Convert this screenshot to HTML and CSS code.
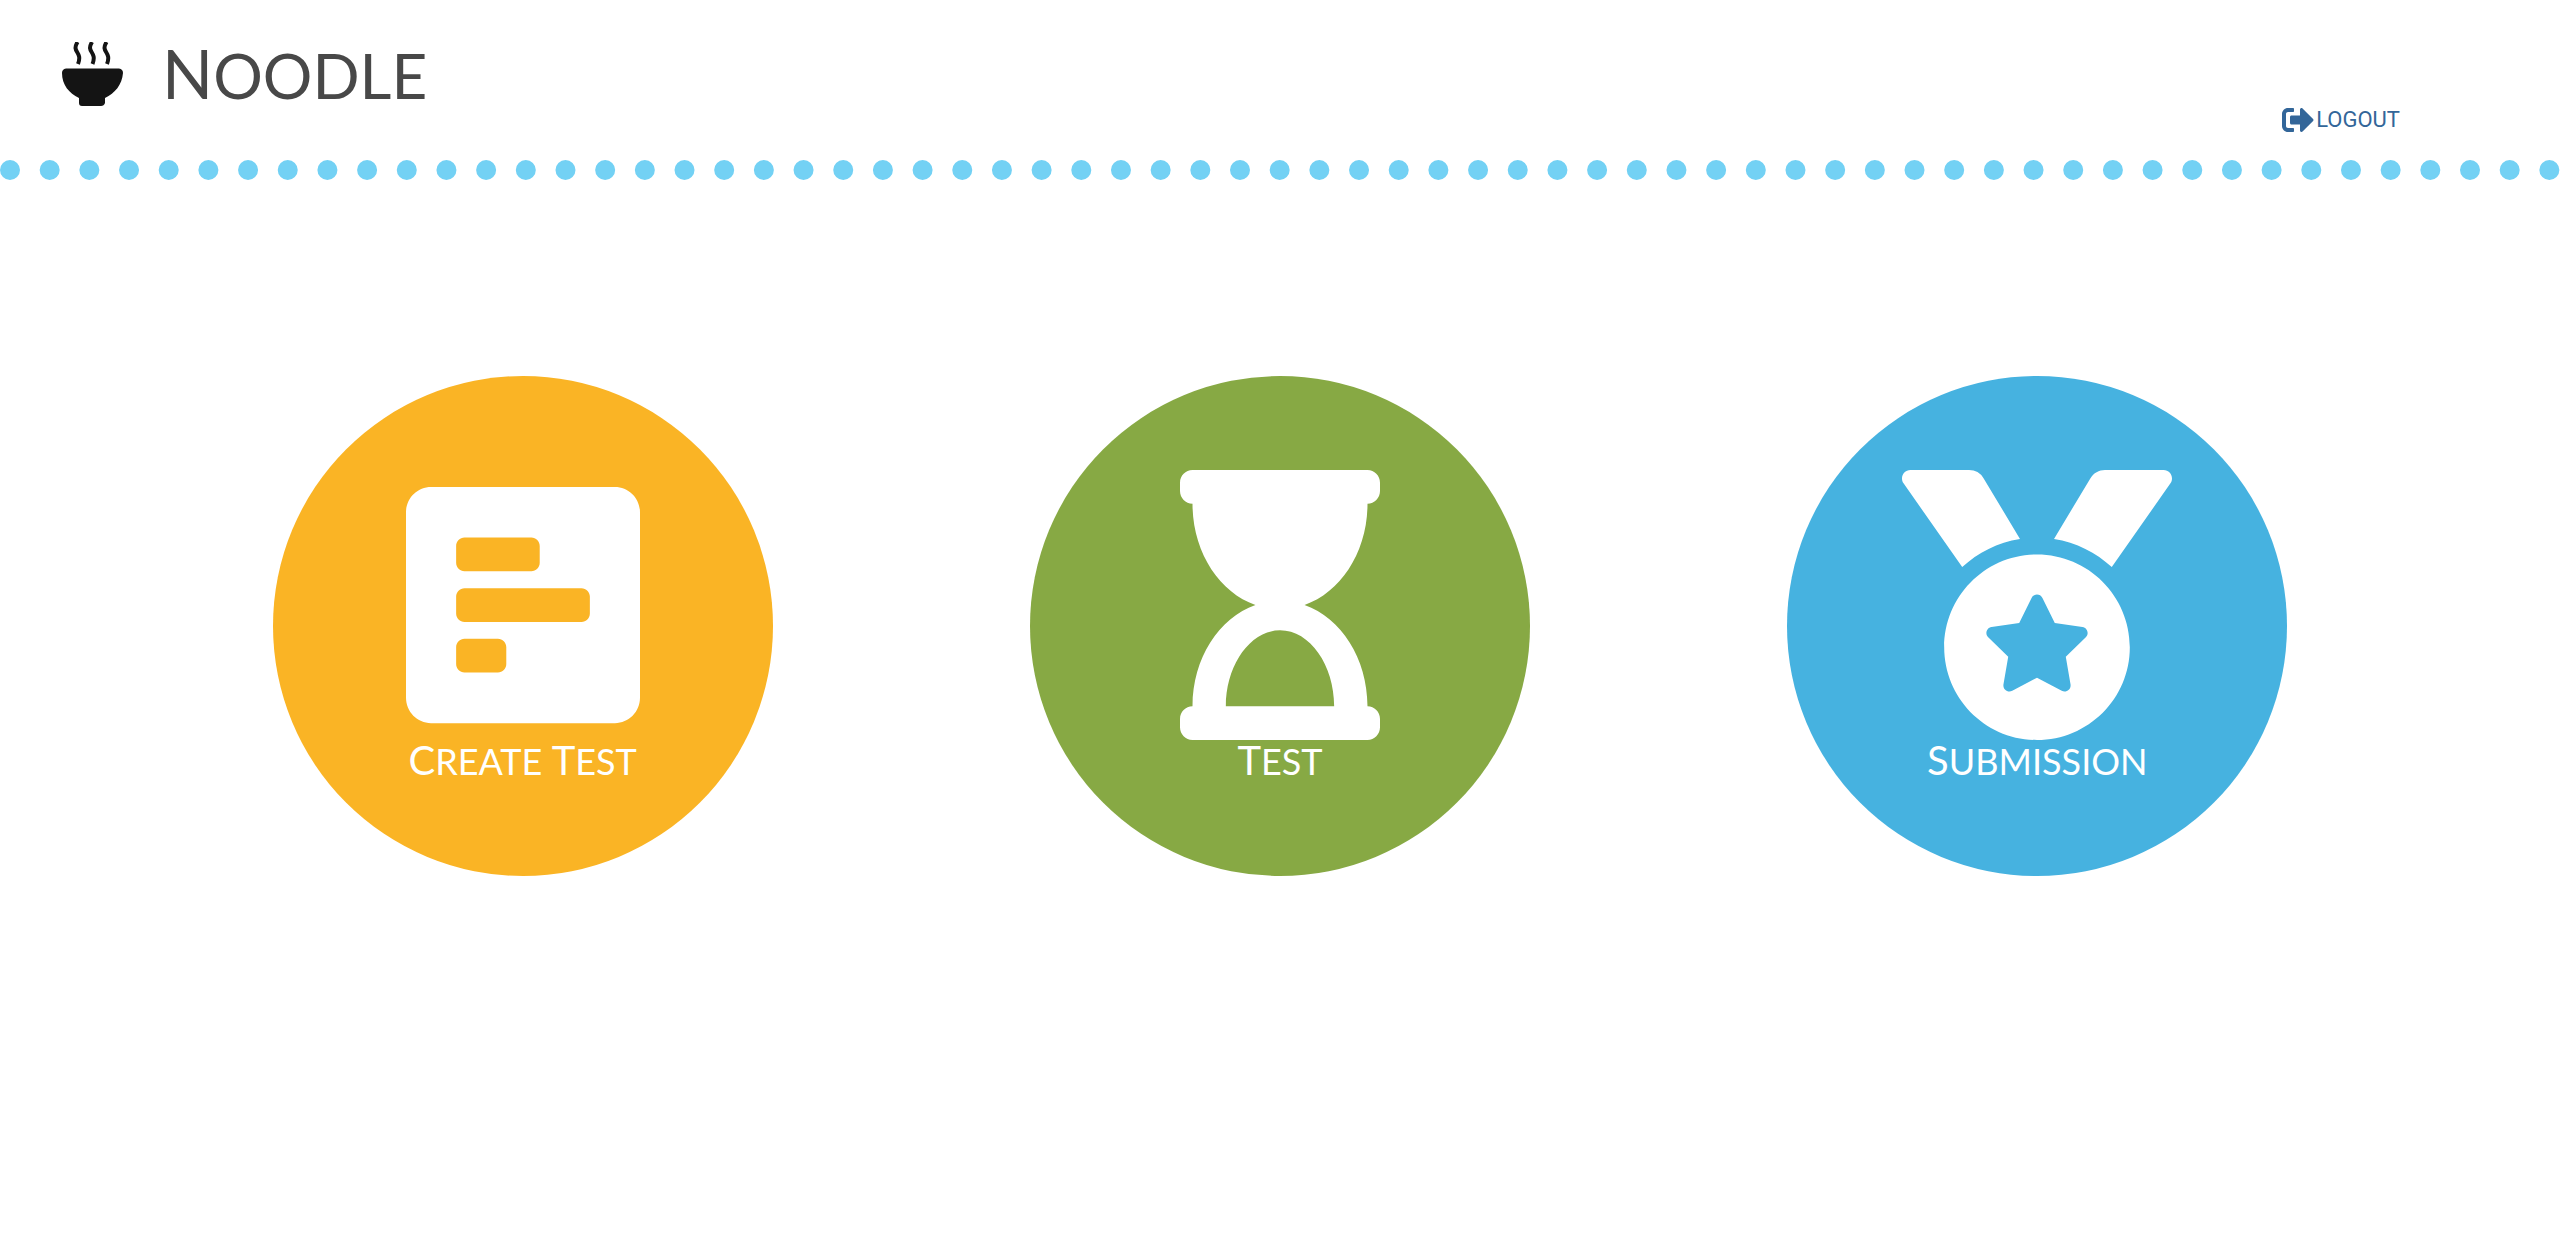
FILE: index.html
```html
<!DOCTYPE html>
<html lang="en">
<head>
<meta charset="utf-8">
<meta name="viewport" content="width=device-width, initial-scale=1">
<title>Noodle</title>
<link rel="stylesheet" href="styles.css">
</head>
<body>
<header class="header">
  <div class="brand">
    <svg class="brand-logo" viewBox="0 0 64 64" aria-hidden="true">
      <path d="M6 26.500H59Q63 27 63 31C62 43 55 51 45 56V61Q44 64 41 64H22Q19 64 19 61V56C9 51 2 43 2 31Q2 27 6 26.500Z"/>
      <g class="steam"><path d="M17.500 0C11 11 23 9 18 22"/><path d="M32 0C25.500 11 37.500 9 32.500 22"/><path d="M46.500 0C40 11 52 9 47 22"/></g>
    </svg>
    <h1 class="brand-name">Noodle</h1>
  </div>
  <a class="logout" href="#">
    <svg class="logout-icon" viewBox="0 0 512 512" aria-hidden="true"><path d="M497 273L329 441c-15 15-41 4.500-41-17v-96H152c-13.300 0-24-10.700-24-24v-96c0-13.300 10.700-24 24-24h136V88c0-21.400 25.900-32 41-17l168 168c9.300 9.400 9.300 24.600 0 34zM192 436v-40c0-6.600-5.400-12-12-12H96c-17.700 0-32-14.300-32-32V160c0-17.700 14.300-32 32-32h84c6.600 0 12-5.400 12-12V76c0-6.600-5.400-12-12-12H96c-53 0-96 43-96 96v192c0 53 43 96 96 96h84c6.600 0 12-5.400 12-12z"/></svg>
    <span>LOGOUT</span>
  </a>
</header>
<main class="menu">
  <a class="tile tile-create" href="#">
    <svg class="tile-icon icon-poll" viewBox="0 0 448 512" preserveAspectRatio="none" aria-hidden="true"><path d="M448 432V80c0-26.500-21.500-48-48-48H48C21.500 32 0 53.500 0 80v352c0 26.500 21.500 48 48 48h352c26.500 0 48-21.500 48-48zM112 192c-8.840 0-16-7.160-16-16v-32c0-8.840 7.160-16 16-16h128c8.840 0 16 7.160 16 16v32c0 8.840-7.160 16-16 16H112zm0 96c-8.840 0-16-7.160-16-16v-32c0-8.840 7.160-16 16-16h224c8.840 0 16 7.160 16 16v32c0 8.840-7.160 16-16 16H112zm0 96c-8.840 0-16-7.160-16-16v-32c0-8.840 7.160-16 16-16h64c8.840 0 16 7.160 16 16v32c0 8.840-7.160 16-16 16h-64z"/></svg>
    <span class="tile-label"><span class="word">Create</span> <span class="word">Test</span></span>
  </a>
  <a class="tile tile-test" href="#">
    <svg class="tile-icon icon-hourglass" viewBox="0 0 384 512" preserveAspectRatio="none" aria-hidden="true"><path d="M360 0H24C10.745 0 0 10.745 0 24v16c0 13.255 10.745 24 24 24 0 90.965 51.016 167.734 120.842 192C75.016 280.266 24 357.035 24 448c-13.255 0-24 10.745-24 24v16c0 13.255 10.745 24 24 24h336c13.255 0 24-10.745 24-24v-16c0-13.255-10.745-24-24-24 0-90.965-51.016-167.734-120.842-192C308.984 231.734 360 154.965 360 64c13.255 0 24-10.745 24-24V24c0-13.255-10.745-24-24-24zm-64 448H88c0-77.458 46.204-144 104-144 57.786 0 104 66.517 104 144z"/></svg>
    <span class="tile-label"><span class="word">Test</span></span>
  </a>
  <a class="tile tile-submission" href="#">
    <svg class="tile-icon" viewBox="0 0 512 512" aria-hidden="true"><path d="M223.750 130.750L154.620 15.540A31.997 31.997 0 0 0 127.180 0H16.030C3.080 0-4.500 14.570 2.920 25.180l111.270 158.960c29.720-27.770 67.520-46.830 109.560-53.390zM495.970 0H384.820c-11.240 0-21.660 5.900-27.440 15.540l-69.130 115.210c42.040 6.560 79.840 25.620 109.560 53.380L509.080 25.180C516.500 14.570 508.920 0 495.970 0zM256 160c-97.200 0-176 78.800-176 176s78.800 176 176 176 176-78.800 176-176-78.800-176-176-176zm92.520 157.260l-37.930 36.960 8.970 52.220c1.600 9.360-8.260 16.510-16.650 12.090L256 393.880l-46.900 24.650c-8.400 4.450-18.250-2.740-16.650-12.090l8.970-52.220-37.930-36.960c-6.820-6.640-3.050-18.230 6.350-19.590l52.430-7.640 23.430-47.520c2.110-4.280 6.190-6.390 10.280-6.390 4.110 0 8.220 2.140 10.330 6.390l23.430 47.520 52.430 7.640c9.400 1.360 13.170 12.950 6.350 19.590z"/></svg>
    <span class="tile-label"><span class="word">Submission</span></span>
  </a>
</main>
</body>
</html>
```

FILE: styles.css
```css
* {
  box-sizing: border-box;
}

body {
  margin: 0;
  background: #fff;
  color: #484848;
  font-family: Lato, "Open Sans", sans-serif;
}

.header {
  display: flex;
  justify-content: space-between;
  align-items: flex-start;
  min-height: 180px;
  padding: 32px 160px 0 60px;
  border-bottom: 20px dotted #73d1f4;
}

.brand {
  display: flex;
  align-items: center;
  gap: 38px;
  height: 84px;
}

.brand-logo {
  width: 64px;
  height: 64px;
  fill: #141414;
}

.steam {
  fill: none;
  stroke: #141414;
  stroke-width: 4;
}

.brand-name {
  margin: 0;
  font-size: 62px;
  line-height: 84px;
  font-weight: 400;
  text-transform: uppercase;
}

.brand-name::first-letter {
  font-size: 67px;
}

.logout {
  display: flex;
  align-items: center;
  gap: 2px;
  margin-top: 72px;
  color: #336699;
  font-family: Roboto, "Liberation Sans", sans-serif;
  font-size: 22px;
  line-height: 32px;
  text-decoration: none;
}

.logout-icon {
  width: 32px;
  height: 32px;
  fill: currentColor;
}

.menu {
  display: grid;
  grid-template-columns: repeat(auto-fit, minmax(500px, 1fr));
  justify-items: center;
  row-gap: 60px;
  padding: 196px 144px 60px;
}

.tile {
  display: flex;
  flex-direction: column;
  align-items: center;
  width: 500px;
  height: 500px;
  padding-top: 94px;
  border-radius: 50%;
  color: #fff;
  text-decoration: none;
}

.tile-create {
  background: #fab425;
}

.tile-test {
  background: #87a944;
}

.tile-submission {
  background: #46b2e0;
}

.tile-icon {
  width: 270px;
  height: 270px;
  fill: currentColor;
}

.icon-poll {
  width: 234px;
}

.icon-hourglass {
  width: 200px;
}

.tile-label {
  font-size: 36px;
  line-height: 40px;
  text-transform: uppercase;
}

.word {
  display: inline-block;
}

.word::first-letter {
  font-size: 40px;
}
```
